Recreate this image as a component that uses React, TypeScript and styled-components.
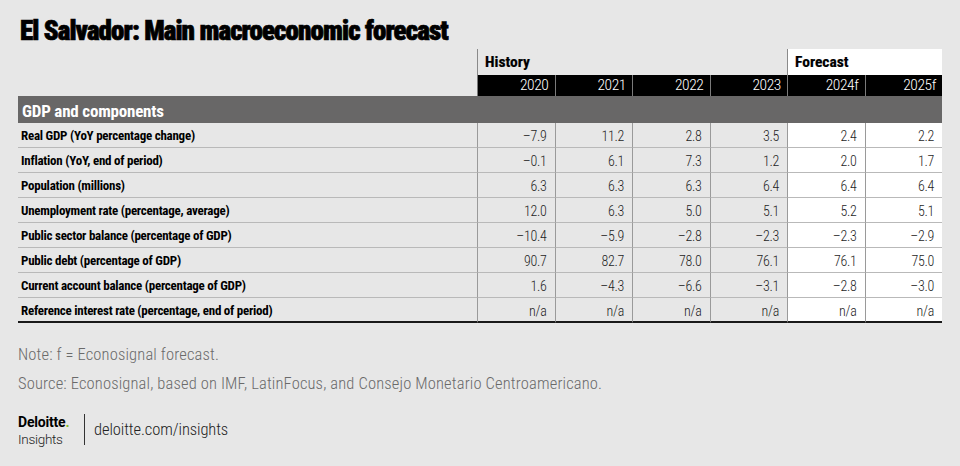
import React from "react";
import styled, { createGlobalStyle } from "styled-components";

const FONT = `"Roboto Condensed", "Liberation Sans Narrow", "DejaVu Sans Condensed", "Noto Sans", sans-serif`;
const WIDE = `Roboto, "Liberation Sans", Arial, sans-serif`;

const Global = createGlobalStyle`
  html, body { margin: 0; padding: 0; background: #e7e7e7; }
  body { font-family: ${FONT}; }
`;

const Page = styled.div`
  width: 960px;
  height: 466px;
  box-sizing: border-box;
  padding: 14px 18px 0 18px;
  background: #e7e7e7;
  display: flex;
  flex-direction: column;
`;

const Title = styled.h1`
  margin: 0 0 0 2px;
  font-family: ${FONT};
  font-weight: 900;
  font-size: 27px;
  line-height: 35px;
  letter-spacing: -0.9px;
  -webkit-text-stroke: 0.7px #000;
  color: #000;
`;

const Table = styled.div`
  display: grid;
  grid-template-columns: 459px repeat(6, 1fr);
  width: 924px;
`;

const Blank = styled.div``;

const GroupCell = styled.div<{ $span: number; $white?: boolean }>`
  grid-column: span ${(p) => p.$span};
  height: 26px;
  box-sizing: border-box;
  border-left: 1px solid #8a8a8a;
  background: ${(p) => (p.$white ? "#fff" : "transparent")};
  padding: 3px 0 0 7px;
  font-weight: 700;
  font-size: 15.5px;
  line-height: 20px;
  -webkit-text-stroke: 0.2px #000;
  color: #000;
`;

const YearCell = styled.div`
  height: 21px;
  box-sizing: border-box;
  background: #000;
  border-left: 1px solid #7a7a7a;
  color: #fff;
  text-align: right;
  padding-right: 6px;
  font-weight: 300;
  font-size: 15.5px;
  letter-spacing: -0.4px;
  line-height: 21px;
`;

const Band = styled.div`
  grid-column: 1 / -1;
  height: 27px;
  box-sizing: border-box;
  background: #686767;
  color: #fff;
  padding: 5px 0 0 4px;
  font-weight: 700;
  font-size: 17px;
  line-height: 20px;
  letter-spacing: -0.2px;
`;

const Label = styled.div<{ $last?: boolean }>`
  height: 25px;
  box-sizing: border-box;
  border-bottom: ${(p) => (p.$last ? "2px solid #1a1a1a" : "1px solid #b9b9b9")};
  padding: 2px 0 0 3px;
  font-weight: 700;
  font-size: 13px;
  letter-spacing: -0.25px;
  line-height: 22px;
  color: #000;
  white-space: nowrap;
`;

const Value = styled.div<{ $last?: boolean; $white?: boolean }>`
  height: 25px;
  box-sizing: border-box;
  border-left: 1px solid #9a9a9a;
  border-bottom: ${(p) => (p.$last ? "2px solid #1a1a1a" : "1px solid #b9b9b9")};
  background: ${(p) => (p.$white ? "#fff" : "transparent")};
  text-align: right;
  padding: 2px 8px 0 0;
  font-weight: 300;
  font-size: 14px;
  letter-spacing: -0.3px;
  line-height: 22px;
  color: #1e1e1e;
`;

const Notes = styled.div`
  margin-top: 22px;
  display: flex;
  flex-direction: column;
  gap: 10px;
  color: #6a6a6a;
  font-weight: 300;
  font-size: 16.5px;
  letter-spacing: 0.15px;
  line-height: 19px;
`;

const Footer = styled.div`
  margin-top: 19px;
  display: flex;
  align-items: center;
  gap: 9px;
`;

const Logo = styled.div`
  display: flex;
  flex-direction: column;
  width: 57px;
  color: #000;
  font-family: ${WIDE};
  padding-top: 2px;
`;

const LogoTop = styled.span`
  font-weight: 700;
  font-size: 14px;
  line-height: 17px;
  letter-spacing: -0.2px;
`;

const Dot = styled.span`
  color: #86bc25;
`;

const LogoBottom = styled.span`
  font-weight: 300;
  font-size: 13.5px;
  line-height: 16px;
  letter-spacing: -0.3px;
  color: #222;
`;

const Divider = styled.div`
  width: 1px;
  height: 31px;
  background: #333;
`;

const Url = styled.span`
  font-weight: 300;
  font-size: 16.5px;
  letter-spacing: -0.1px;
  color: #222;
`;

const years = ["2020", "2021", "2022", "2023", "2024f", "2025f"];

const rows: [string, string[]][] = [
  ["Real GDP (YoY percentage change)", ["–7.9", "11.2", "2.8", "3.5", "2.4", "2.2"]],
  ["Inflation (YoY, end of period)", ["–0.1", "6.1", "7.3", "1.2", "2.0", "1.7"]],
  ["Population (millions)", ["6.3", "6.3", "6.3", "6.4", "6.4", "6.4"]],
  ["Unemployment rate (percentage, average)", ["12.0", "6.3", "5.0", "5.1", "5.2", "5.1"]],
  ["Public sector balance (percentage of GDP)", ["–10.4", "–5.9", "–2.8", "–2.3", "–2.3", "–2.9"]],
  ["Public debt (percentage of GDP)", ["90.7", "82.7", "78.0", "76.1", "76.1", "75.0"]],
  ["Current account balance (percentage of GDP)", ["1.6", "–4.3", "–6.6", "–3.1", "–2.8", "–3.0"]],
  ["Reference interest rate (percentage, end of period)", ["n/a", "n/a", "n/a", "n/a", "n/a", "n/a"]],
];

export default function App() {
  return (
    <>
      <Global />
      <Page>
        <Title>El Salvador: Main macroeconomic forecast</Title>
        <Table>
          <Blank />
          <GroupCell $span={4}>History</GroupCell>
          <GroupCell $span={2} $white>Forecast</GroupCell>
          <Blank />
          {years.map((y) => (
            <YearCell key={y}>{y}</YearCell>
          ))}
          <Band>GDP and components</Band>
          {rows.map(([label, vals], i) => {
            const last = i === rows.length - 1;
            return (
              <React.Fragment key={label}>
                <Label $last={last}>{label}</Label>
                {vals.map((v, j) => (
                  <Value key={j} $last={last} $white={j >= 4}>
                    {v}
                  </Value>
                ))}
              </React.Fragment>
            );
          })}
        </Table>
        <Notes>
          <span>Note: f = Econosignal forecast.</span>
          <span>Source: Econosignal, based on IMF, LatinFocus, and Consejo Monetario Centroamericano.</span>
        </Notes>
        <Footer>
          <Logo>
            <LogoTop>
              Deloitte<Dot>.</Dot>
            </LogoTop>
            <LogoBottom>Insights</LogoBottom>
          </Logo>
          <Divider />
          <Url>deloitte.com/insights</Url>
        </Footer>
      </Page>
    </>
  );
}
